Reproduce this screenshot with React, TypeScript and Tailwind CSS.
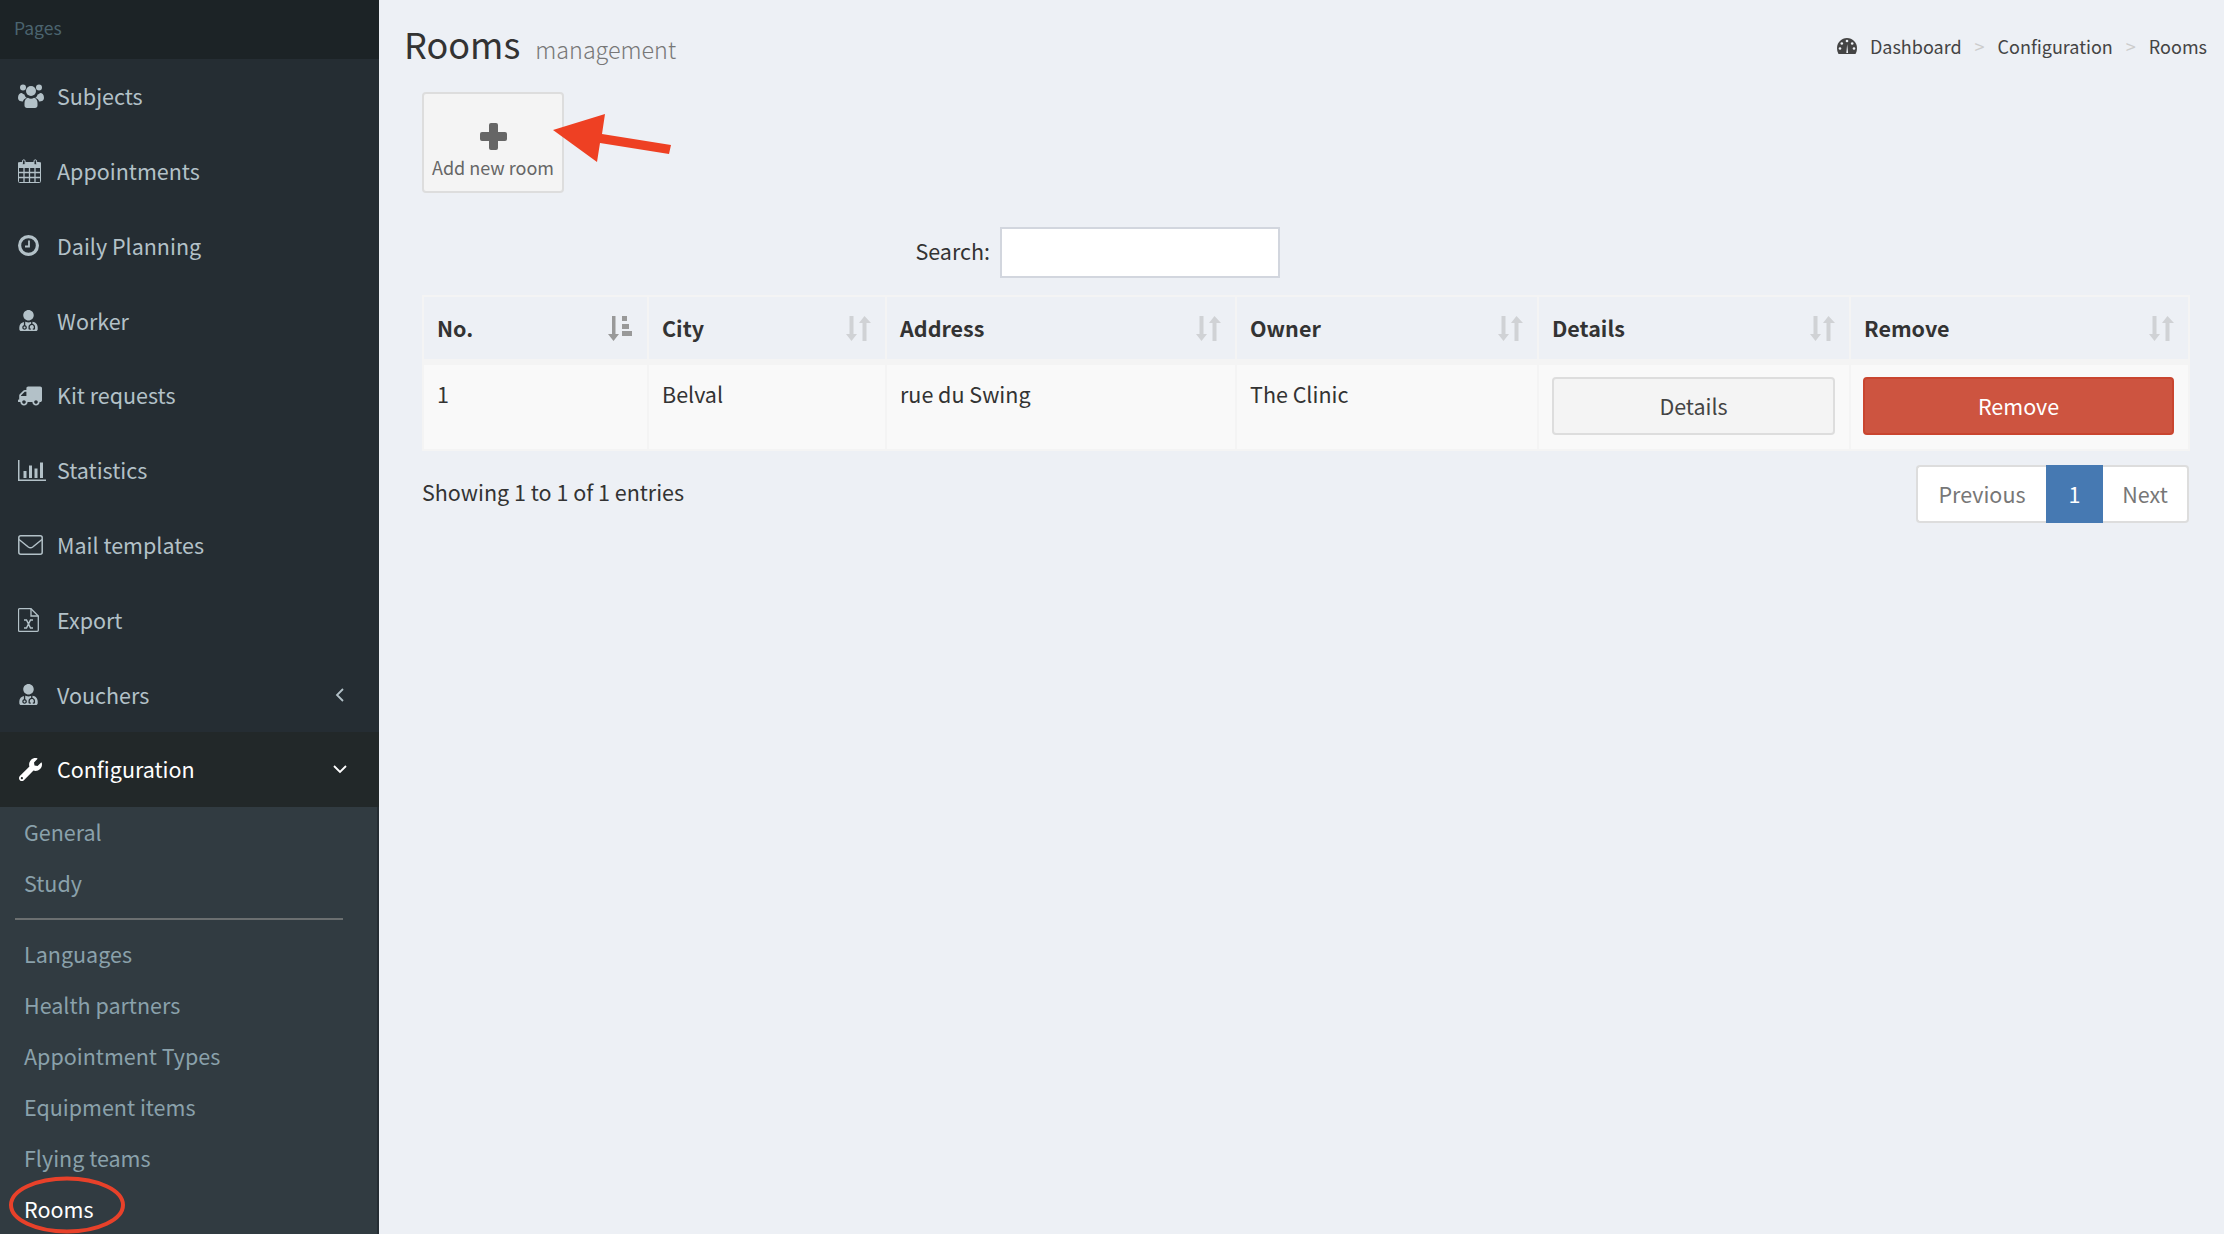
import { FaUserMd, FaTruck, FaWrench } from 'react-icons/fa';
import type { ReactNode } from 'react';

const FONT = "font-['Noto_Sans_CJK_SC','Noto_Sans',sans-serif]";

function UsersIcon() {
  return (
    <svg viewBox="0 0 26 24" className="w-[26px] h-6 fill-current">
      <circle cx="5" cy="3.6" r="3" />
      <circle cx="21" cy="3.6" r="3" />
      <circle cx="13" cy="7" r="5" />
      <path d="M0 14c0-3.4 1.6-5 3.8-5 1 .9 1.6 1.2 2.6 1.4.4 1.6 1.2 2.7 2.3 3.4-2 .7-3.4 2-3.8 3.7C2 17.500 0 16.500 0 14zM26 14c0-3.400-1.600-5-3.800-5-1 .9-1.600 1.200-2.600 1.400-.4 1.600-1.200 2.700-2.300 3.400 2 .7 3.400 2 3.800 3.700 2.900 0 4.900-1 4.900-3.500z" />
      <path d="M6.500 19c0-3 1.500-5 3.500-5.300 1.800 1.300 4.200 1.300 6 0 2 .3 3.500 2.300 3.500 5.300v2.500c0 1.500-1 2.500-2.500 2.500H9c-1.500 0-2.500-1-2.500-2.500z" />
    </svg>
  );
}

function CalendarIcon() {
  return (
    <svg viewBox="0 0 23 24" className="w-[23px] h-6 fill-none stroke-current">
      <path d="M1.500 3.500h20a1 1 0 0 1 1 1v18a1 1 0 0 1-1 1h-20a1 1 0 0 1-1-1v-18a1 1 0 0 1 1-1z" strokeWidth="1" />
      <path d="M0 3.500h23V9H0z" className="fill-current" strokeWidth="0" />
      <path d="M1 13.500h21M1 18.500h21M6 9v14M11.500 9v14M17 9v14" strokeWidth="1.300" />
      <rect x="4.500" y="0.800" width="2.600" height="5" rx="1.300" className="fill-[#252d33]" strokeWidth="1" />
      <rect x="16" y="0.800" width="2.600" height="5" rx="1.300" className="fill-[#252d33]" strokeWidth="1" />
    </svg>
  );
}

function ClockIcon() {
  return (
    <svg viewBox="0 0 21 21" className="w-[21px] h-[21px] fill-none stroke-current">
      <circle cx="10.500" cy="10.500" r="8.900" strokeWidth="3.200" />
      <path d="M11 5.500v6H7" strokeWidth="1.800" />
    </svg>
  );
}

function ChartIcon() {
  return (
    <svg viewBox="0 0 28 21" className="w-7 h-[21px] fill-current">
      <path d="M0 0h1.500v19.500H28V21H0z" />
      <path d="M5.500 11h3v7h-3zM11 5.500h3V18h-3zM16.500 8.500h3V18h-3zM22 2.500h3V18h-3z" />
    </svg>
  );
}

function EnvelopeIcon() {
  return (
    <svg viewBox="0 0 25 20" className="w-[25px] h-5 fill-none stroke-current" strokeWidth="1.500">
      <rect x="0.800" y="0.800" width="23.400" height="18.400" rx="2" />
      <path d="M1 4.500l9.300 7.500c1.300 1 3.100 1 4.400 0L24 4.500" />
    </svg>
  );
}

function FileExcelIcon() {
  return (
    <svg viewBox="0 0 21 24" className="w-[21px] h-6 fill-none stroke-current">
      <path d="M1.500.7h11.500l7.300 7.300v14.300a1 1 0 0 1-1 1H1.500a1 1 0 0 1-1-1V1.700a1 1 0 0 1 1-1z" strokeWidth="1.300" />
      <path d="M13 .7V8h7.300" strokeWidth="1.300" />
      <path d="M6 12h2.500l4 8H15M6 20h2.500l4-8H15" strokeWidth="1.500" />
    </svg>
  );
}

function GaugeIcon() {
  return (
    <svg viewBox="0 0 20 16" className="h-4 w-5">
      <path d="M10 0C4.500 0 0 4.500 0 10c0 2.200.5 4.200 1.500 6h17c1-1.800 1.500-3.800 1.500-6C20 4.500 15.500 0 10 0z" className="fill-[#444]" />
      <circle cx="10" cy="3" r="1.300" className="fill-[#edf0f5]" />
      <circle cx="4.800" cy="5.500" r="1.300" className="fill-[#edf0f5]" />
      <circle cx="15.200" cy="5.500" r="1.300" className="fill-[#edf0f5]" />
      <circle cx="3" cy="10.500" r="1.300" className="fill-[#edf0f5]" />
      <circle cx="17" cy="10.500" r="1.300" className="fill-[#edf0f5]" />
      <path d="M9.300 15l.9-9 .9 9z" className="fill-[#edf0f5]" />
    </svg>
  );
}

function ChevronIcon({ down }: { down?: boolean }) {
  return (
    <svg viewBox="0 0 14 14" className="w-[14px] h-[14px] fill-none stroke-current" strokeWidth="1.800">
      {down ? <path d="M1 4l6 6 6-6" /> : <path d="M10 1L4 7l6 6" />}
    </svg>
  );
}

function PlusIcon() {
  return (
    <svg viewBox="0 0 27 27" className="w-[27px] h-[27px] fill-[#666]">
      <path d="M9 2a2 2 0 0 1 2-2h5a2 2 0 0 1 2 2v7h7a2 2 0 0 1 2 2v5a2 2 0 0 1-2 2h-7v7a2 2 0 0 1-2 2h-5a2 2 0 0 1-2-2v-7H2a2 2 0 0 1-2-2v-5a2 2 0 0 1 2-2h7z" />
    </svg>
  );
}

function SortIcon({ active }: { active?: boolean }) {
  if (active) {
    return (
      <svg viewBox="0 0 25 25" className="w-[25px] h-[25px] fill-[#999]">
        <path d="M4 0h3.500v18H11l-5.500 7L0 18h4z" />
        <path d="M14 0h5v5h-5zM14 8h7v5h-7zM14 15h10v5H14z" />
      </svg>
    );
  }
  return (
    <svg viewBox="0 0 25 25" className="w-[25px] h-[25px] fill-[#d0d2d5]">
      <path d="M3.500 0h4v18H11l-5.500 7L0 18h3.500z" />
      <path d="M16.500 25h4V7H25L18.500 0 13 7h3.500z" />
    </svg>
  );
}

const NAV: { label: string; icon: ReactNode; chevron?: boolean }[] = [
  { label: 'Subjects', icon: <UsersIcon /> },
  { label: 'Appointments', icon: <CalendarIcon /> },
  { label: 'Daily Planning', icon: <ClockIcon /> },
  { label: 'Worker', icon: <FaUserMd size={21} /> },
  { label: 'Kit requests', icon: <FaTruck size={24} className="-scale-x-100" /> },
  { label: 'Statistics', icon: <ChartIcon /> },
  { label: 'Mail templates', icon: <EnvelopeIcon /> },
  { label: 'Export', icon: <FileExcelIcon /> },
  { label: 'Vouchers', icon: <FaUserMd size={21} />, chevron: true },
];

const COLUMNS = [
  { label: 'No.', width: 'w-[225px]', active: true },
  { label: 'City', width: 'w-[238px]' },
  { label: 'Address', width: 'w-[350px]' },
  { label: 'Owner', width: 'w-[302px]' },
  { label: 'Details', width: 'w-[312px]' },
  { label: 'Remove', width: 'w-[339px]' },
];

function Sidebar() {
  return (
    <aside className="relative w-[379px] shrink-0 bg-[#252d33] text-[21.500px] text-[#b3c1c8]">
      <div className="h-[59px] bg-[#1c2326] pl-[14px] pt-[16px] text-[17.500px] leading-[24px] text-[#4b646f]">Pages</div>
      {NAV.map((item) => (
        <div key={item.label} className="flex h-[74.800px] items-center pr-[32px]">
          <span className="flex w-[57px] shrink-0 justify-start pl-[18px]">{item.icon}</span>
          <span className="flex-1">{item.label}</span>
          {item.chevron && <ChevronIcon />}
        </div>
      ))}
      <div className="flex h-[75px] items-center bg-[#222829] pb-[1px] pr-[32px] text-white">
        <span className="flex w-[57px] shrink-0 justify-start pl-[19px]">
          <FaWrench size={23} />
        </span>
        <span className="flex-1">Configuration</span>
        <ChevronIcon down />
      </div>
      <div className="mr-[2px] h-[427px] overflow-hidden bg-[#313b41] text-[#8aa1ab]">
        {['General', 'Study'].map((s) => (
          <div key={s} className="flex h-[51px] items-center pb-[2px] pl-[24px]">{s}</div>
        ))}
        <div className="mx-[15px] my-[9px] h-[2px] w-[328px] bg-[#6b6f70]" />
        {['Languages', 'Health partners', 'Appointment Types', 'Equipment items', 'Flying teams'].map((s) => (
          <div key={s} className="flex h-[51px] items-center pb-[2px] pl-[24px]">{s}</div>
        ))}
        <div className="flex h-[51px] items-center pb-[2px] pl-[24px] text-white">Rooms</div>
      </div>
      {/* red annotation ring */}
      <svg viewBox="0 0 118 58" className="absolute left-[8px] top-[1176px] h-[58px] w-[118px] fill-none stroke-[#e8412a]" strokeWidth="4">
        <ellipse cx="59" cy="29" rx="56" ry="26.500" />
      </svg>
    </aside>
  );
}

export default function App() {
  return (
    <div className={`${FONT} flex h-[1234px] w-[2224px] overflow-hidden bg-[#edf0f5] text-[#333]`}>
      <Sidebar />
      <main className="relative flex-1">
        <div className="flex h-[92px] items-start justify-between pl-[25px] pr-[19px]">
          <h1 className="mt-[15px] flex items-baseline gap-[15px] text-[36px] leading-[56px] text-[#333]">
            Rooms
            <small className="text-[23.300px] font-light text-[#777]">management</small>
          </h1>
          <div className="mt-[32px] flex items-center text-[18px] leading-[28px] text-[#444]">
            <GaugeIcon />
            <span className="ml-[13px]">Dashboard</span>
            <span className="mx-[13px] text-[#ccc]">&gt;</span>
            <span>Configuration</span>
            <span className="mx-[13px] text-[#ccc]">&gt;</span>
            <span>Rooms</span>
          </div>
        </div>
        <div className="pl-[43px] pr-[36px]">
          <button className="flex h-[101px] w-[142px] flex-col items-center rounded-[4px] border-2 border-[#ddd] bg-[#f4f4f4] pt-[29px] text-[18px] leading-[24px] text-[#666]">
            <PlusIcon />
            <span className="mt-[5px]">Add new room</span>
          </button>
          <div className="mt-[34px] flex w-[858px] items-center justify-end gap-[10px] text-[21.500px]">
            <span className="-mt-[3px]">Search:</span>
            <input className="h-[51px] w-[280px] border-2 border-[#d2d6de] bg-white" />
          </div>
          <table className="mt-[17px] w-[1766px] table-fixed border-collapse border-2 border-[#f4f4f4] text-[21.500px]">
            <thead>
              <tr>
                {COLUMNS.map((c) => (
                  <th key={c.label} className={`${c.width} h-[66px] border-2 border-b-[6px] border-[#f4f4f4] pl-[13px] pr-[14px] text-left font-bold`}>
                    <div className="flex items-center justify-between">
                      <span>{c.label}</span>
                      <SortIcon active={c.active} />
                    </div>
                  </th>
                ))}
              </tr>
            </thead>
            <tbody>
              <tr className="bg-[#f9f9f9]">
                <td className="h-[88px] border-2 border-[#f4f4f4] px-[13px] pt-[13px] align-top leading-[32px]">1</td>
                <td className="border-2 border-[#f4f4f4] px-[13px] pt-[13px] align-top leading-[32px]">Belval</td>
                <td className="border-2 border-[#f4f4f4] px-[13px] pt-[13px] align-top leading-[32px]">rue du Swing</td>
                <td className="border-2 border-[#f4f4f4] px-[13px] pt-[13px] align-top leading-[32px]">The Clinic</td>
                <td className="border-2 border-[#f4f4f4] pb-[2px] pl-[13px] pr-[14px] align-middle">
                  <button className="h-[58px] w-full rounded-[4px] border-2 border-[#ddd] bg-[#f4f4f4] text-[#444]">Details</button>
                </td>
                <td className="border-2 border-[#f4f4f4] pb-[2px] pl-[12px] pr-[14px] align-middle">
                  <button className="h-[58px] w-full rounded-[4px] border-2 border-[#c9452f] bg-[#cd5440] text-white">Remove</button>
                </td>
              </tr>
            </tbody>
          </table>
          <div className="mt-[14px] flex items-start justify-between text-[21.500px]">
            <span className="mt-[11px] leading-[32px]">Showing 1 to 1 of 1 entries</span>
            <div className="mr-[1px] flex h-[58px] text-[#777]">
              <span className="flex w-[130px] items-center justify-center rounded-l-[4px] border-2 border-r-0 border-[#ddd] bg-white">Previous</span>
              <span className="flex w-[57px] items-center justify-center bg-[#4679b2] text-white">1</span>
              <span className="flex w-[86px] items-center justify-center rounded-r-[4px] border-2 border-l-0 border-[#ddd] bg-white">Next</span>
            </div>
          </div>
        </div>
        {/* red annotation arrow */}
        <svg viewBox="0 0 120 50" className="absolute left-[174px] top-[114px] h-[50px] w-[120px] fill-[#ee4023]">
          <polygon points="0,16 52,0 49,20 118,31 116,40 47,29 44,48" />
        </svg>
      </main>
    </div>
  );
}
